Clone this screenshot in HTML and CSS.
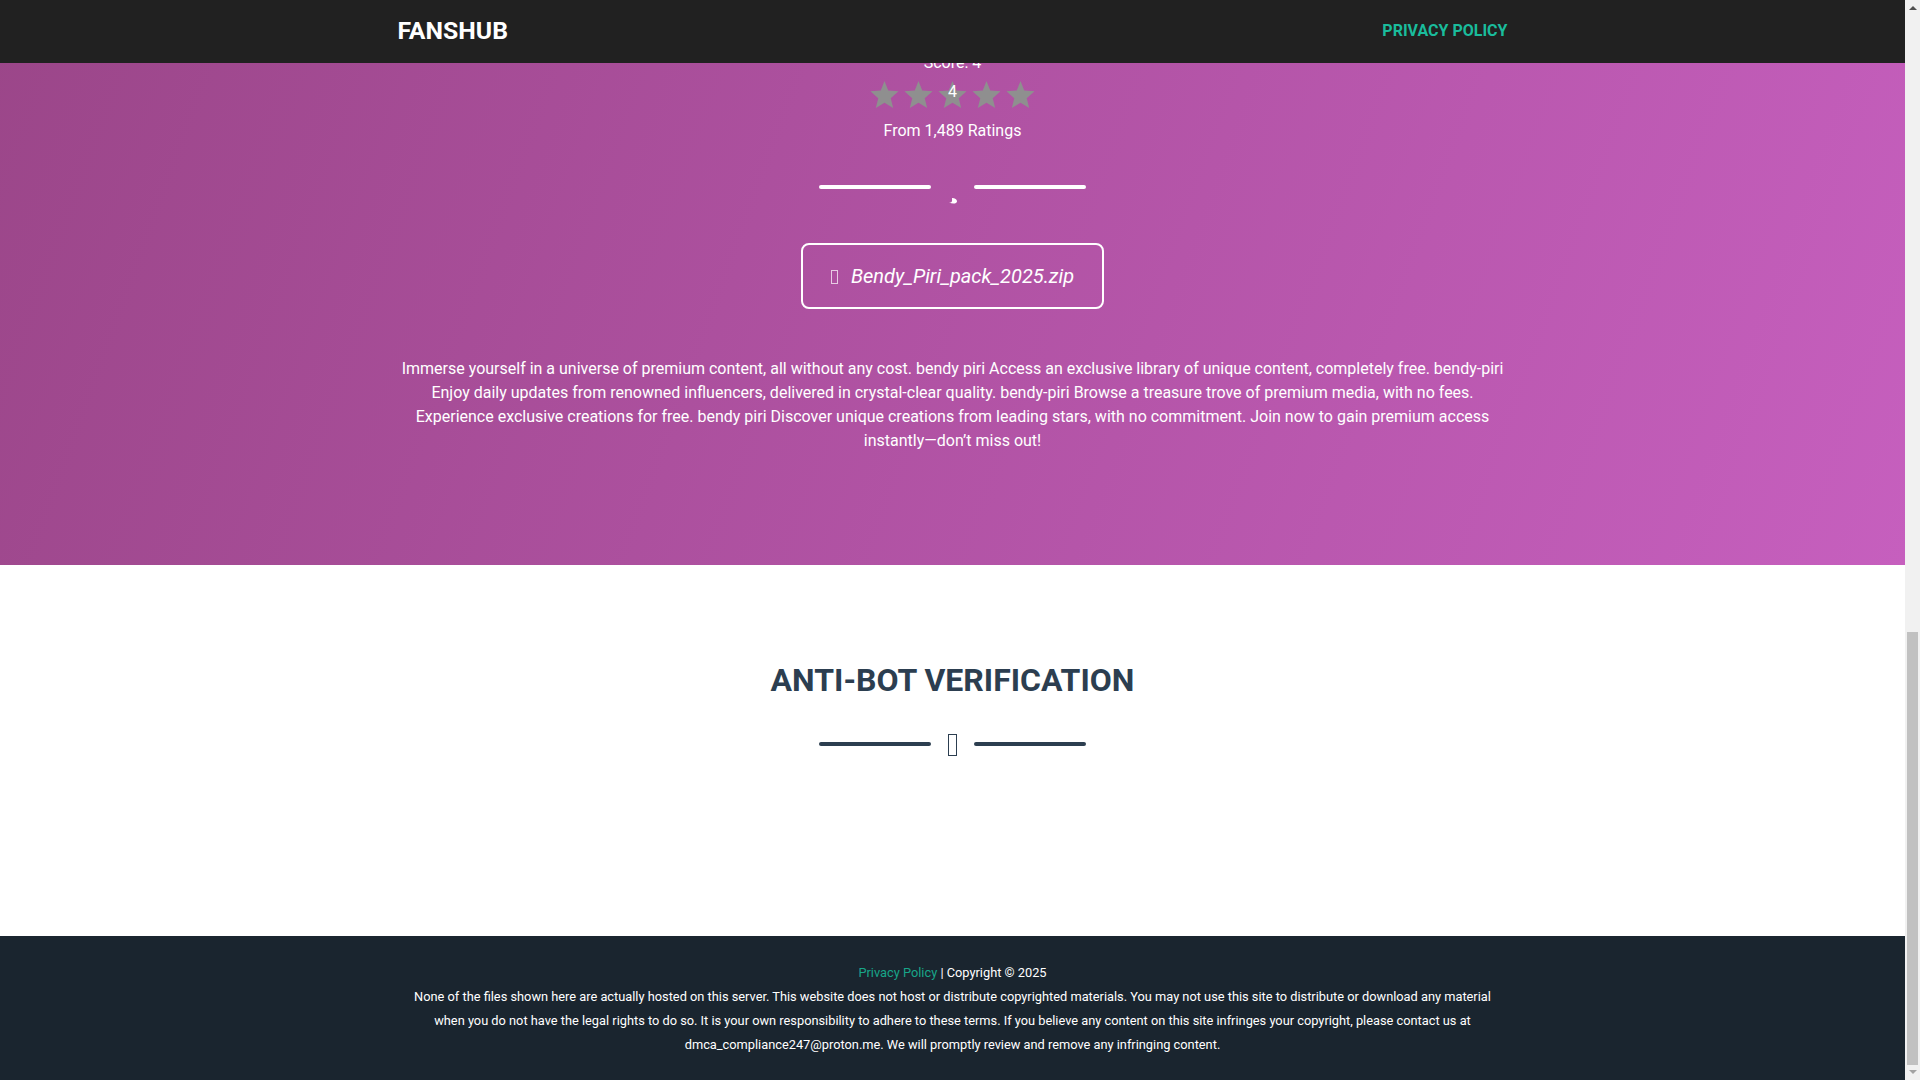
FILE: index.html
```html
<!DOCTYPE html>
<html>
<head>
  <title>FansHub</title>
  <link rel="stylesheet" href="styles.css">
</head>
<body>

  <!-- Top navigation -->
  <nav class="topnav">
    <div class="container topnav-row">
      <a class="brand" href="#">FANSHUB</a>
      <a class="nav-link" href="#">PRIVACY POLICY</a>
    </div>
  </nav>

  <div class="page">
    <main class="content">

      <!-- Download section -->
      <section class="masthead">
        <div class="container">
          <div class="score">Score: 4</div>
          <div class="stars-wrap">
            <div class="stars">
              <svg viewBox="0 0 24 23"><polygon points="12,0 15.2,8 24,8.8 17.3,14.6 19.400,23 12,18.600 4.600,23 6.700,14.600 0,8.800 8.800,8"/></svg>
              <svg viewBox="0 0 24 23"><polygon points="12,0 15.2,8 24,8.8 17.3,14.6 19.400,23 12,18.600 4.600,23 6.700,14.600 0,8.800 8.800,8"/></svg>
              <svg viewBox="0 0 24 23"><polygon points="12,0 15.2,8 24,8.8 17.3,14.6 19.400,23 12,18.600 4.600,23 6.700,14.600 0,8.800 8.800,8"/></svg>
              <svg viewBox="0 0 24 23"><polygon points="12,0 15.2,8 24,8.8 17.3,14.6 19.400,23 12,18.600 4.600,23 6.700,14.600 0,8.800 8.800,8"/></svg>
              <svg viewBox="0 0 24 23"><polygon points="12,0 15.2,8 24,8.8 17.3,14.6 19.400,23 12,18.600 4.600,23 6.700,14.600 0,8.800 8.800,8"/></svg>
            </div>
            <span class="stars-value">4</span>
          </div>
          <div class="ratings">From 1,489 Ratings</div>

          <div class="divider divider-light">
            <span class="divider-line"></span>
            <span class="divider-icon mark">
              <svg viewBox="0 0 8 6"><path d="M0 4.500C2 5 3.500 4 3 1L3 0C6 0 8 1.500 8 3.500 8 5.500 4 6.500 0 4.500z"/></svg>
            </span>
            <span class="divider-line"></span>
          </div>

          <a class="file-btn" href="#"><span class="tofu tofu-small"></span>Bendy_Piri_pack_2025.zip</a>

          <p class="lead">Immerse yourself in a universe of premium content, all without any cost. bendy piri Access an exclusive library of unique content, completely free. bendy-piri Enjoy daily updates from renowned influencers, delivered in crystal-clear quality. bendy-piri Browse a treasure trove of premium media, with no fees. Experience exclusive creations for free. bendy piri Discover unique creations from leading stars, with no commitment. Join now to gain premium access instantly—don’t miss out!</p>
        </div>
      </section>

      <!-- Verification section -->
      <section class="verify">
        <div class="container">
          <h2 class="verify-title">ANTI-BOT VERIFICATION</h2>
          <div class="divider divider-dark">
            <span class="divider-line"></span>
            <span class="divider-icon"><span class="tofu"></span></span>
            <span class="divider-line"></span>
          </div>
        </div>
      </section>

      <footer class="footer">
        <div class="container">
          <a class="footer-link" href="#">Privacy Policy</a> | Copyright © 2025<br>
          None of the files shown here are actually hosted on this server. This website does not host or distribute copyrighted materials. You may not use this site to distribute or download any material when you do not have the legal rights to do so. It is your own responsibility to adhere to these terms. If you believe any content on this site infringes your copyright, please contact us at dmca_compliance247@proton.me. We will promptly review and remove any infringing content.
        </div>
      </footer>
    </main>

    <!-- Scrollbar -->
    <aside class="scrollbar">
      <span class="arrow arrow-up"></span>
      <span class="thumb"></span>
      <span class="arrow arrow-down"></span>
    </aside>
  </div>

</body>
</html>
```

FILE: styles.css
```css
html, body {
  margin: 0;
  height: 100%;
  overflow: hidden;
}

body {
  font-family: Roboto, sans-serif;
  font-size: 16px;
  line-height: 24px;
  color: #fff;
  background: #fff;
}

a {
  text-decoration: none;
}

.container {
  width: 1110px;
  margin: 0 auto;
}

.page {
  display: flex;
  height: 1080px;
}

.content {
  flex: 1;
  min-width: 0;
}

/* nav */
.topnav {
  position: fixed;
  top: 0;
  left: 0;
  width: 1905px;
  height: 63px;
  background: #212121;
  z-index: 10;
}

.topnav-row {
  box-sizing: border-box;
  height: 100%;
  padding-bottom: 2px;
  display: flex;
  justify-content: space-between;
  align-items: center;
}

.brand {
  color: #fff;
  font-size: 24.8px;
  font-weight: 700;
}

.nav-link {
  color: #1abc9c;
  font-size: 16px;
  font-weight: 700;
}

/* masthead */
.masthead {
  height: 565px;
  box-sizing: border-box;
  padding-top: 51px;
  text-align: center;
  background: linear-gradient(110deg, #9b4689 0%, #c65fbe 100%);
}

.score {
  height: 24px;
}

.stars-wrap {
  position: relative;
  height: 42px;
  display: flex;
  justify-content: center;
  align-items: center;
}

.stars {
  display: flex;
  gap: 5px;
  margin-top: -3px;
}

.stars svg {
  width: 29px;
  height: 27px;
  fill: #8f8f8f;
}

.stars-value {
  position: absolute;
  left: 0;
  right: 0;
  top: 5px;
}

.ratings {
  margin-top: 2px;
}

.divider {
  display: flex;
  justify-content: center;
  align-items: center;
}

.divider-line {
  width: 112px;
  height: 4px;
  border-radius: 4px;
}

.divider-icon {
  width: 43px;
  text-align: center;
}

.divider-light {
  height: 32px;
  margin-top: 28px;
}

.divider-light .divider-line {
  background: #fff;
}

.mark {
  height: 32px;
  display: flex;
  justify-content: center;
  align-items: flex-end;
}

.mark svg {
  width: 8px;
  height: 6px;
  margin-bottom: -1px;
  fill: #fff;
}

.tofu {
  display: inline-block;
  box-sizing: border-box;
  width: 9px;
  height: 22px;
  border: 1px solid currentColor;
  vertical-align: middle;
}

.tofu-small {
  position: relative;
  top: -1px;
  width: 7px;
  height: 14px;
  margin-right: 13px;
  border-color: rgba(255, 255, 255, 0.7);
}

.file-btn {
  display: block;
  box-sizing: border-box;
  width: 303px;
  height: 66px;
  margin: 40px auto 0;
  border: 2px solid #fff;
  border-radius: 8px;
  color: #fff;
  font-size: 20px;
  font-style: italic;
  line-height: 62px;
}

.lead {
  margin: 48px 0 0;
}

/* verification */
.verify {
  height: 371px;
  box-sizing: border-box;
  padding-top: 95px;
  text-align: center;
  color: #2c3e50;
}

.verify-title {
  margin: 0;
  font-size: 32px;
  font-weight: 700;
  line-height: 40px;
}

.divider-dark {
  height: 32px;
  margin-top: 28px;
}

.divider-dark .divider-line {
  background: #2c3e50;
}

/* footer */
.footer {
  height: 144px;
  box-sizing: border-box;
  padding-top: 25px;
  background: #1a252f;
  text-align: center;
  font-size: 12.8px;
}

.footer-link {
  color: #18a689;
}

/* scrollbar */
.scrollbar {
  width: 15px;
  flex: none;
  background: #f1f1f1;
  position: relative;
  z-index: 20;
}

.thumb {
  position: absolute;
  top: 632px;
  left: 2px;
  width: 11px;
  height: 433px;
  background: #c1c1c1;
}

.arrow {
  position: absolute;
  left: 3.500px;
  width: 0;
  height: 0;
  border-left: 4px solid transparent;
  border-right: 4px solid transparent;
}

.arrow-up {
  top: 6px;
  border-bottom: 4px solid #505050;
}

.arrow-down {
  bottom: 6px;
  border-top: 4px solid #a3a3a3;
}
```
